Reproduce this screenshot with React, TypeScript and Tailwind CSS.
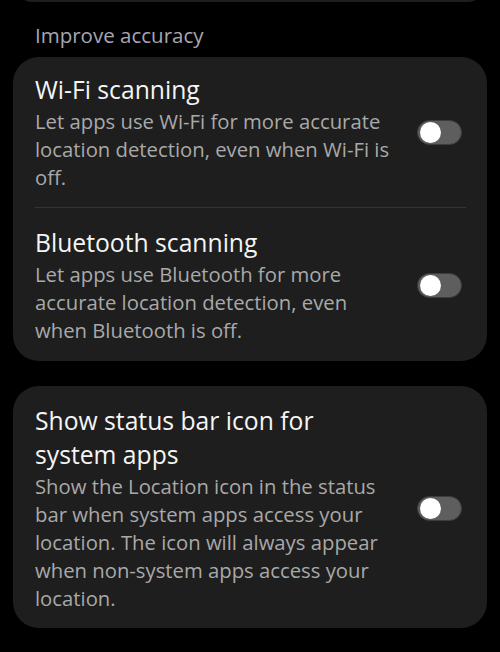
import React from "react";

function Toggle() {
  return (
    <div className="flex h-[25px] w-[45px] shrink-0 items-center rounded-full border border-[#3c3c3c] bg-[#5e5e5e] px-[2px]">
      <div className="h-[21px] w-[21px] rounded-full bg-white" />
    </div>
  );
}

function Item({ title, desc }: { title: string[]; desc: string[] }) {
  return (
    <div className="flex items-center justify-between">
      <div className="w-[356px] whitespace-nowrap">
        {title.map((t, i) => (
          <div key={i} className="text-[24.7px] leading-[34px] text-[#f5f5f5]">
            {t}
          </div>
        ))}
        {desc.map((t, i) => (
          <div key={i} className="text-[20.3px] leading-[28px] text-[#a9a9a9]">
            {t}
          </div>
        ))}
      </div>
      <Toggle />
    </div>
  );
}

export default function App() {
  return (
    <div
      className="h-[652px] w-[500px] overflow-hidden bg-black"
      style={{ fontFamily: "'Open Sans', 'Noto Sans', sans-serif" }}
    >
      <div className="mx-[13px] mt-[-38px] h-[40px] rounded-[26px] bg-[#1e1e1e]" />
      <div className="px-[35px] pt-[19px] text-[20.5px] leading-[28px] text-[#a6a7b3]">
        Improve accuracy
      </div>
      <div className="mx-[13px] mt-[8px] rounded-[26px] bg-[#1e1e1e] pl-[22px] pr-[25px] pt-[16px] pb-[17px]">
        <Item
          title={["Wi-Fi scanning"]}
          desc={[
            "Let apps use Wi-Fi for more accurate",
            "location detection, even when Wi-Fi is",
            "off.",
          ]}
        />
        <div className="mt-[16px] mb-[18px] mr-[-4px] h-px bg-[#343434]" />
        <Item
          title={["Bluetooth scanning"]}
          desc={[
            "Let apps use Bluetooth for more",
            "accurate location detection, even",
            "when Bluetooth is off.",
          ]}
        />
      </div>
      <div className="mx-[13px] mt-[25px] rounded-[26px] bg-[#1e1e1e] pl-[22px] pr-[25px] pt-[18px] pb-[16px]">
        <Item
          title={["Show status bar icon for", "system apps"]}
          desc={[
            "Show the Location icon in the status",
            "bar when system apps access your",
            "location. The icon will always appear",
            "when non-system apps access your",
            "location.",
          ]}
        />
      </div>
    </div>
  );
}
